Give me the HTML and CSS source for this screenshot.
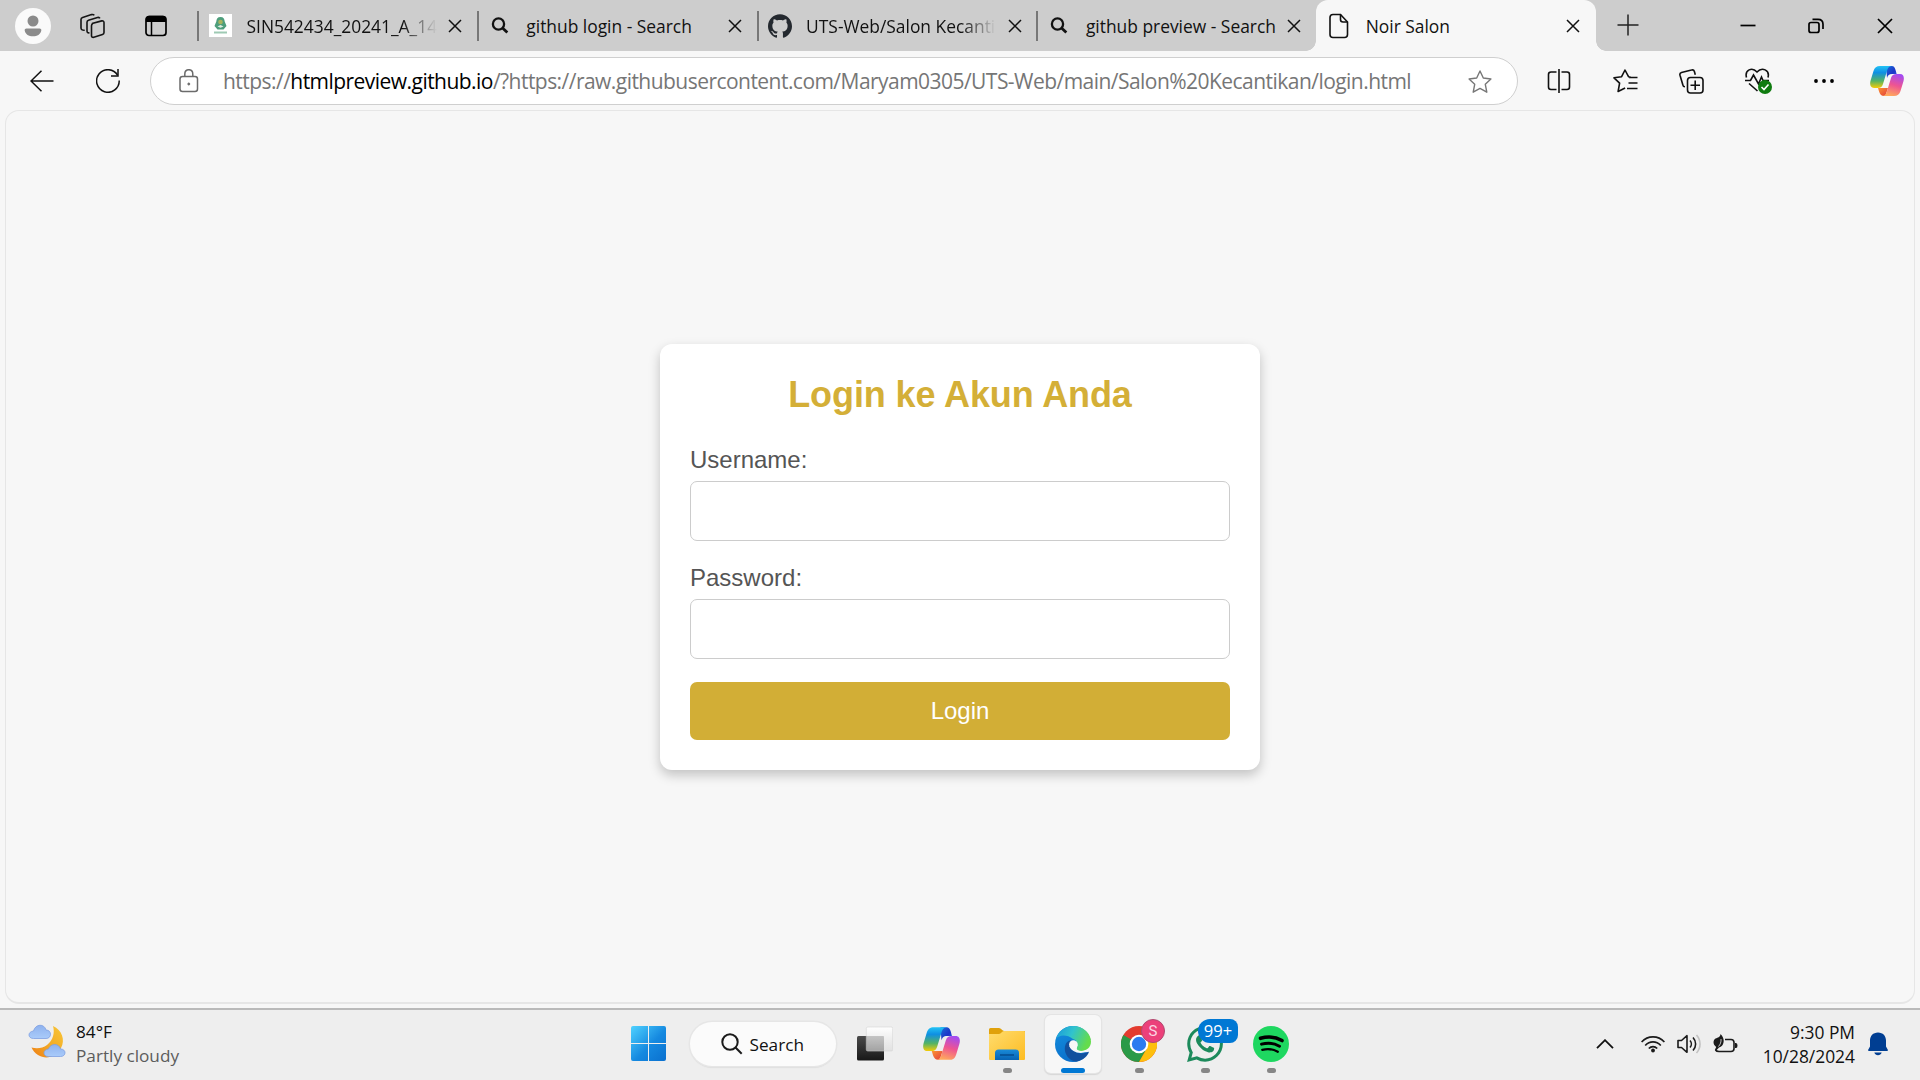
FILE: index.html
```html
<!DOCTYPE html>
<html lang="id">
<head>
<meta charset="utf-8">
<title>Noir Salon</title>
<link rel="stylesheet" href="styles.css">
</head>
<body>
<svg class="defs" aria-hidden="true">
  <defs>
    <linearGradient id="cpBlue" x1="0" y1="0" x2="0" y2="1"><stop offset="0" stop-color="#22c3f5"/><stop offset=".3" stop-color="#0f8fe3"/><stop offset=".68" stop-color="#55b364"/><stop offset="1" stop-color="#f7cc05"/></linearGradient>
    <linearGradient id="cpDeep" x1="0" y1="0" x2="1" y2="1"><stop offset="0" stop-color="#1a6fd8"/><stop offset=".6" stop-color="#1c35c8"/><stop offset="1" stop-color="#2b61e6"/></linearGradient>
    <linearGradient id="cpPink" x1=".7" y1="0" x2=".4" y2="1"><stop offset="0" stop-color="#a24bf3"/><stop offset=".5" stop-color="#ee5492"/><stop offset="1" stop-color="#ffa95c"/></linearGradient>
    <linearGradient id="cpRed" x1="0" y1="0" x2="1" y2="1"><stop offset="0" stop-color="#fc9430"/><stop offset="1" stop-color="#e23a3e"/></linearGradient>
    <linearGradient id="win" x1="0" y1="0" x2="35" y2="35" gradientUnits="userSpaceOnUse"><stop offset="0" stop-color="#4fd2ff"/><stop offset=".55" stop-color="#1589e0"/><stop offset="1" stop-color="#0a70cf"/></linearGradient>
    <linearGradient id="edgeTop" x1="0" y1="0" x2="1" y2=".35"><stop offset="0" stop-color="#1897dc"/><stop offset=".5" stop-color="#31c3cd"/><stop offset="1" stop-color="#64dc4c"/></linearGradient>
    <linearGradient id="edgeLeft" x1="0" y1="0" x2=".4" y2="1"><stop offset="0" stop-color="#1490df"/><stop offset="1" stop-color="#0b6fcb"/></linearGradient>
    <linearGradient id="folder" x1="0" y1="0" x2="1" y2="1"><stop offset="0" stop-color="#ffdc6e"/><stop offset="1" stop-color="#fdbc22"/></linearGradient>
    <linearGradient id="folderBlue" x1="0" y1="0" x2="0" y2="1"><stop offset="0" stop-color="#1a8bd8"/><stop offset="1" stop-color="#0763b4"/></linearGradient>
    <linearGradient id="dark" x1="0" y1="0" x2="0" y2="1"><stop offset="0" stop-color="#4a4a4a"/><stop offset="1" stop-color="#181818"/></linearGradient>
    <linearGradient id="glass" x1="0" y1="0" x2="0" y2="1"><stop offset="0" stop-color="#fff" stop-opacity=".95"/><stop offset="1" stop-color="#dedede" stop-opacity=".75"/></linearGradient>
    <linearGradient id="moon" x1="1" y1="0" x2="0" y2="1"><stop offset="0" stop-color="#f8c637"/><stop offset=".5" stop-color="#f3ac27"/><stop offset="1" stop-color="#ee7d15"/></linearGradient>
    <linearGradient id="cloud" x1="0" y1="0" x2="0" y2="1"><stop offset="0" stop-color="#8fb2ee"/><stop offset="1" stop-color="#a9cbfa"/></linearGradient>
    <symbol id="copilot" viewBox="0 0 34 30">
      <path fill="url(#cpRed)" d="M8 22h10l-2 6c-.4 1.400-1 2-2.300 2C10 30 9.300 26 8 22z"/>
      <path fill="url(#cpDeep)" d="M16 0h6c2.600 0 3.600 3.500 4.600 8H22c-3 0-4 1-5 4z"/>
      <path fill="url(#cpBlue)" d="M10 0h12c-3.500.2-4.300 2.500-5.200 5.500L13 18c-1 3-2.500 4-5.500 4H4C0 22-.4 18 .6 14.500L3.500 5C4.600 1.500 6.500 0 10 0z"/>
      <path fill="url(#cpPink)" d="M24 30H12c3.500-.2 4.300-2.500 5.200-5.500L21 12c1-3 2.500-4 5.500-4H30c4 0 4.400 4 3.400 7.500L30.500 25c-1.100 3.500-3 5-6.500 5z"/>
    </symbol>
    <symbol id="close" viewBox="0 0 14 14"><path d="M1 1l12 12M13 1L1 13" fill="none" stroke="#111" stroke-width="1.500"/></symbol>
    <symbol id="find" viewBox="0 0 18 18"><circle cx="7.500" cy="7" r="5.600" fill="none" stroke="#111" stroke-width="2.300"/><path d="M11.500 11l4.800 4.600" stroke="#111" stroke-width="2.800"/></symbol>
  </defs>
</svg>

<header class="tabbar">
  <div class="cell"><span class="avatar"><svg width="18" height="22" viewBox="0 0 18 22" fill="#8b8b8b"><circle cx="9" cy="6" r="5.500"/><path d="M2.500 13.500h13c1.500 0 2 1 1.800 2-.8 4-4 5.800-8.300 5.800S1.500 19.500.7 15.500c-.2-1 .3-2 1.800-2z"/></svg></span></div>
  <div class="cell"><svg width="26" height="26" viewBox="0 0 26 26" fill="none" stroke="#151515" stroke-width="1.600"><path d="M12 10.600l9.700-2.700c1.300-.3 2.300.4 2.300 1.700v10c0 1-.6 1.700-1.500 2l-8.700 2.700c-1.300.4-2.300-.4-2.300-1.600v-9.900c0-1.200.4-2 1.500-2.200z"/><path d="M9.500 19.800c-1.600.3-2.500-.4-2.500-1.800V9.300c0-1 .5-1.800 1.500-2.100l9-2.700c1-.3 2 0 2.400.9M4.700 17.200C2.800 17.400 1 16.800 1 15V6.500c0-1 .6-1.800 1.600-2.100L11.500 1.600c1.200-.3 2.200-.1 2.700.8"/></svg></div>
  <div class="cell"><svg width="22" height="22" viewBox="0 0 22 22"><rect x="1" y="1.500" width="20" height="19" rx="3" fill="none" stroke="#000" stroke-width="1.700"/><path d="M1 7V4c0-2 1-3.300 3.300-3.300h13.400C20 .7 21 2 21 4v3z"/><path d="M6.500 7v13.500" stroke="#000" stroke-width="1.500"/></svg></div>
  <div class="tab">
    <span class="fav"><svg width="23" height="23" viewBox="0 0 23 23"><path fill="#fff" d="M0 0h23v23H0z"/><path fill="#4e9e7c" d="M11.500 3c3 0 4 2 4.200 4.500L17.500 12l-3 3.500h-6L5.500 12l1.800-4.500C7.500 5 8.500 3 11.500 3z"/><circle cx="11.500" cy="8" r="2.300" fill="#a9b45f"/><path fill="#e1efe3" d="M8.500 12.500l3-1.500 3 1.500-3 1.200z"/><path stroke="#9fcab4" stroke-width="2" d="M5 18.500h13"/></svg></span>
    <span class="label fade">SIN542434_20241_A_14</span><svg class="x"><use href="#close"/></svg>
  </div>
  <div class="tab"><span class="fav"><svg width="18" height="18"><use href="#find"/></svg></span><span class="label">github login - Search</span><svg class="x"><use href="#close"/></svg></div>
  <div class="tab"><span class="fav"><svg width="24" height="24" viewBox="0 0 24 24"><path fill="#24292f" d="M12 .297c-6.630 0-12 5.373-12 12 0 5.303 3.438 9.800 8.205 11.385.6.113.82-.258.82-.577 0-.285-.01-1.040-.015-2.040-3.338.724-4.042-1.610-4.042-1.610C4.422 18.070 3.633 17.700 3.633 17.700c-1.087-.744.084-.729.084-.729 1.205.084 1.838 1.236 1.838 1.236 1.070 1.835 2.809 1.305 3.495.998.108-.776.417-1.305.76-1.605-2.665-.3-5.466-1.332-5.466-5.930 0-1.310.465-2.380 1.235-3.220-.135-.303-.54-1.523.105-3.176 0 0 1.005-.322 3.300 1.230.96-.267 1.980-.399 3-.405 1.020.006 2.040.138 3 .405 2.280-1.552 3.285-1.230 3.285-1.230.645 1.653.24 2.873.12 3.176.765.84 1.230 1.910 1.230 3.220 0 4.610-2.805 5.625-5.475 5.920.42.36.81 1.096.81 2.220 0 1.606-.015 2.896-.015 3.286 0 .315.21.69.825.57C20.565 22.092 24 17.592 24 12.297c0-6.627-5.373-12-12-12"/></svg></span><span class="label fade">UTS-Web/Salon Kecanti</span><svg class="x"><use href="#close"/></svg></div>
  <div class="tab"><span class="fav"><svg width="18" height="18"><use href="#find"/></svg></span><span class="label">github preview - Search</span><svg class="x"><use href="#close"/></svg></div>
  <div class="tab active"><span class="fav"><svg width="20" height="26" viewBox="0 0 20 26" fill="none" stroke="#111" stroke-width="1.600"><path d="M4 1.500h7.500L18.500 9v12.500c0 2-1 3-3 3H4c-2 0-3-1-3-3v-17c0-2 1-3 3-3z"/><path d="M11.500 1.500v5c0 1.500.8 2.500 2.500 2.500h4.500"/></svg></span><span class="label">Noir Salon</span><svg class="x"><use href="#close"/></svg></div>
  <div class="cell plus"><svg width="22" height="22" viewBox="0 0 22 22" stroke="#222" stroke-width="1.500"><path d="M11 .5v21M.5 11h21"/></svg></div>
  <div class="cell win"><svg width="16" height="16" viewBox="0 0 16 16" stroke="#000" stroke-width="1.700"><path d="M.5 7.500h15"/></svg></div>
  <div class="cell"><svg width="16" height="16" viewBox="0 0 16 16" fill="none" stroke="#000" stroke-width="1.700"><rect x="1" y="4.500" width="10" height="10" rx="2"/><path d="M4.500 1.300H10c3.200 0 5 1.800 5 5V11"/></svg></div>
  <div class="cell"><svg width="16" height="16" viewBox="0 0 16 16" stroke="#000" stroke-width="1.700"><path d="M1 1l14 14M15 1L1 15"/></svg></div>
</header>

<nav class="toolbar">
  <div class="back"><svg width="24" height="22" viewBox="0 0 24 22" fill="none" stroke="#111" stroke-width="1.500"><path d="M23.500 11H1M11.500.7L1 11l10.500 10.300"/></svg></div>
  <div class="reload"><svg width="24" height="24" viewBox="0 0 24 24" fill="none" stroke="#111" stroke-width="1.500"><path d="M23.200 11.500A11.300 11.300 0 1 1 21.500 6"/><path d="M22 0v7h-7"/></svg></div>
  <div class="address">
    <svg class="lock" width="20" height="24" viewBox="0 0 20 24" fill="none" stroke="#6b6b6b" stroke-width="1.500"><rect x="1" y="7.500" width="17.500" height="15" rx="2.500"/><path d="M5.800 7.500V5.200c0-6 8-6 8 0v2.300"/><circle cx="9.800" cy="15" r="1" fill="#6b6b6b" stroke-width="1"/></svg>
    <span class="url">https://<b>htmlpreview.github.io</b>/?https://raw.githubusercontent.com/Maryam0305/UTS-Web/main/Salon%20Kecantikan/login.html</span>
    <svg class="star" width="24" height="24" viewBox="0 0 24 24" fill="none" stroke="#777" stroke-width="1.400" stroke-linejoin="round"><path d="M12 1l3.300 7 7.600 1-5.600 5.300 1.500 7.900-6.800-3.800-6.800 3.800 1.500-7.900L1.100 9l7.600-1z"/></svg>
  </div>
  <div class="tools">
    <div class="cell"><svg width="24" height="24" viewBox="0 0 24 24" fill="none" stroke="#111" stroke-width="1.600"><path d="M12 0v24M9.500 3H4Q1.500 3 1.500 5.500v12.500Q1.500 20.500 4 20.500h5.500M14.500 3H20q2.500 0 2.500 2.500v12.500q0 2.500-2.500 2.500h-5.500"/></svg></div>
    <div class="cell"><svg width="25" height="24" viewBox="0 0 25 24" fill="none" stroke="#111" stroke-width="1.600" stroke-linejoin="round"><path d="M17.500 8l-2-.3L12 1 8.600 7.700 1 8.800l5.600 5.400-1.500 8.300 7-3.500M16 8.500h8.500M15.500 14h9M14 19.500h10.500"/></svg></div>
    <div class="cell"><svg width="25" height="25" viewBox="0 0 25 25" fill="none" stroke="#111" stroke-width="1.600"><rect x="8.500" y="8.500" width="15.500" height="15.500" rx="3"/><path d="M16.200 11.500v9.500M11.500 16.200h9.500M6 17.800c-1.200 0-2-.8-2.200-2L1 6.300c-.4-1.500.2-2.500 1.500-2.900L12.500 1c1.400-.4 2.500.2 2.900 1.500l.9 3.200"/></svg></div>
    <div class="cell"><svg width="28" height="26" viewBox="0 0 28 26" fill="none" stroke="#111" stroke-width="1.600"><path d="M2.500 9.500C.5 2 8-1.500 13 4c5-5.500 13-2 11 5.500M1 12.500h5.500l3-5.500 5 9 3-7 1.500 3.500h6M5 15.500l8.500 7.500"/><circle cx="21" cy="19" r="7" fill="#107c10" stroke="none"/><path d="M17.500 19l2.500 2.500 4.500-5" stroke="#fff" stroke-width="1.600"/></svg></div>
    <div class="cell dots"><svg width="20" height="6" viewBox="0 0 20 6"><circle cx="2" cy="3" r="1.900"/><circle cx="10" cy="3" r="1.900"/><circle cx="18" cy="3" r="1.900"/></svg></div>
    <div class="cell"><svg width="34" height="30"><use href="#copilot"/></svg></div>
  </div>
</nav>

<main class="page">
  <form class="card">
    <h1>Login ke Akun Anda</h1>
    <label for="user">Username:</label>
    <input id="user" type="text">
    <label for="pass">Password:</label>
    <input id="pass" type="password">
    <button type="button">Login</button>
  </form>
</main>

<footer class="taskbar">
  <div class="weather">
    <svg width="38" height="36" viewBox="0 0 38 36"><path fill="url(#moon)" d="M25 2c9 4 12.500 14 8 22-5 9-15 12-23 7-3-2-5-4-6.500-7.500 5 1.500 11 1 15.500-2.500C25 16 27 9 25 2z"/><path fill="url(#cloud)" stroke="#7d9fe2" stroke-width=".8" d="M5.500 14.500c-6 0-6-7 0-7.500C7.500-.5 16.500-.5 18 6c6 0 6 8.500 0 8.500z"/><path fill="url(#cloud)" stroke="#7d9fe2" stroke-width=".8" d="M20.500 32.500c-6 0-6-7 0-7.500 2-6 10.500-6 12 0 6 0 6 7.500 0 7.500z"/></svg>
    <div class="wtext"><span class="temp">84°F</span><span class="cond">Partly cloudy</span></div>
  </div>
  <div class="apps">
    <div class="app"><svg width="35" height="35" viewBox="0 0 35 35" fill="url(#win)"><path d="M2 0h15v17H0V2Q0 0 2 0zM18 0h15q2 0 2 2v15H18zM0 18h17v17H2q-2 0-2-2zM18 18h17v15q0 2-2 2H18z"/></svg></div>
    <div class="search"><svg width="22" height="22" viewBox="0 0 22 22" fill="none" stroke="#1b1b1b" stroke-width="2"><circle cx="9" cy="9" r="7.700"/><path d="M14.500 14.500L20.700 20.700"/></svg><span>Search</span></div>
    <div class="app"><svg width="36" height="35" viewBox="0 0 36 35"><rect y="10" width="27" height="24.500" rx="1.500" fill="url(#dark)"/><rect x="9.300" y="1" width="26.400" height="24" rx="1.500" fill="url(#glass)" stroke="#d4d4d4" stroke-width=".6"/><path d="M9 10h18v15H9z" fill="#777" opacity=".25"/></svg></div>
    <div class="app"><svg width="37" height="33"><use href="#copilot"/></svg></div>
    <div class="app dot"><svg width="36" height="34" viewBox="0 0 36 34"><path fill="#e0a10b" d="M0 2.500Q0 1 1.500 1H10c2 0 3.500 3 5 3h21v8H0z"/><path fill="url(#folder)" d="M0 7h10c2 0 3-3 5-3h20q1 0 1 1v27q0 1-1 1H1q-1 0-1-1z"/><path fill="url(#folderBlue)" d="M6 33v-7q0-3.500 3.500-3.500h17Q30 22.500 30 26v7z"/><path d="M11 28h14" stroke="#064f92" stroke-width="1.600"/></svg></div>
    <div class="app current"><svg width="36" height="36" viewBox="0 0 36 36"><circle cx="18" cy="18" r="18" fill="url(#edgeLeft)"/><path fill="#f7f7f7" d="M24 36l12-11V14H22l-3 10 16 3z"/><path fill="url(#edgeTop)" d="M1 13C3.500 5 10 0 18 0c10 0 18 7.500 18 15.500 0 6-4.500 9.500-10 9.500-4 0-5.500-1.500-4-4 1.500-3 0-7-4-8C12 8 4 8.500 1 13z"/><path fill="#12509e" d="M11 17.500C7 26 14 35.500 21.500 35.500 27 34.500 31.500 31 33.500 27c.7-1.500-.2-1.300-1.300-.7C26 29 18 27 15.500 21c-1-3-.5-5 1-6.500-2.500-.5-4.500 1-5.500 3z"/><circle cx="18.300" cy="18.500" r="4.200" fill="#f7f7f7"/><path fill="#f7f7f7" d="M14.300 20c2 6 10 8.500 17.500 5.800l-1.500-1.400c-3.500 1-7 .8-8.300-.8-.7-1 .2-2 .5-4.600z"/></svg></div>
    <div class="app dot"><svg width="36" height="36" viewBox="0 0 36 36"><circle cx="18" cy="18" r="18" fill="#e33b2e"/><path fill="#2a9a47" d="M18 18L2.400 9A18 18 0 0 0 18 36l7.800-13.500z"/><path fill="#fdbf0d" d="M18 36a18 18 0 0 0 15.600-27H18v9l7.800 4.500z"/><circle cx="18" cy="18" r="9.300" fill="#fff"/><circle cx="18" cy="18" r="7.200" fill="#2c7bf0"/></svg><span class="profile">S</span></div>
    <div class="app dot"><svg width="36" height="36" viewBox="0 0 24 24" fill="#1c8a5b"><path d="M17.472 14.382c-.297-.149-1.758-.867-2.030-.967-.273-.099-.471-.148-.67.15-.197.297-.767.966-.94 1.164-.173.199-.347.223-.644.075-.297-.15-1.255-.463-2.390-1.475-.883-.788-1.480-1.761-1.653-2.059-.173-.297-.018-.458.13-.606.134-.133.298-.347.446-.52.149-.174.198-.298.298-.497.099-.198.05-.371-.025-.52-.075-.149-.669-1.612-.916-2.207-.242-.579-.487-.5-.669-.51-.173-.008-.371-.01-.57-.01-.198 0-.52.074-.792.372-.272.297-1.040 1.016-1.040 2.479 0 1.462 1.065 2.875 1.213 3.074.149.198 2.096 3.200 5.077 4.487.709.306 1.262.489 1.694.625.712.227 1.360.195 1.871.118.571-.085 1.758-.719 2.006-1.413.248-.694.248-1.289.173-1.413-.074-.124-.272-.198-.57-.347m-5.421 7.403h-.004a9.870 9.870 0 01-5.031-1.378l-.361-.214-3.741.982.998-3.648-.235-.374a9.860 9.860 0 01-1.510-5.260c.001-5.450 4.436-9.884 9.888-9.884 2.640 0 5.122 1.030 6.988 2.898a9.825 9.825 0 012.893 6.994c-.003 5.450-4.437 9.884-9.885 9.884m8.413-18.297A11.815 11.815 0 0012.050 0C5.495 0 .16 5.335.157 11.892c0 2.096.547 4.142 1.588 5.945L.057 24l6.305-1.654a11.882 11.882 0 005.683 1.448h.005c6.554 0 11.890-5.335 11.893-11.893a11.821 11.821 0 00-3.480-8.413z"/></svg><span class="count">99+</span></div>
    <div class="app dot"><svg width="36" height="36" viewBox="0 0 36 36" fill="none" stroke="#000" stroke-linecap="round"><circle cx="18" cy="18" r="18" fill="#1ed760" stroke="none"/><path stroke-width="3.600" d="M7.500 12.300c7-2 15.500-1.200 21.500 2.200"/><path stroke-width="2.900" d="M8.500 18.200c6-1.700 13-.9 18 2"/><path stroke-width="2.300" d="M9.300 23.800c5-1.300 11-.7 15.500 1.900"/></svg></div>
  </div>
  <div class="tray">
    <div class="chev"><svg width="18" height="10" viewBox="0 0 18 10" fill="none" stroke="#111" stroke-width="1.800"><path d="M1 9.200l8-8 8 8"/></svg></div>
    <div class="sys"><svg width="24" height="18" viewBox="0 0 24 18" fill="none" stroke="#1b1b1b" stroke-width="1.700"><path d="M.6 7c6.300-6.800 16.500-6.800 22.800 0M4.200 10.500c4.500-4.800 11.100-4.800 15.600 0M7.800 13.500c2.500-2.600 5.900-2.600 8.400 0"/><circle cx="12" cy="15.500" r="1.900" fill="#1b1b1b" stroke="none"/></svg></div>
    <div class="sys"><svg width="24" height="20" viewBox="0 0 24 20" fill="none" stroke="#1b1b1b" stroke-width="1.600"><path d="M1 6.500h3.500L10 1.700v16.600l-5.500-4.800H1z" stroke-linejoin="round"/><path d="M13 6.500c1.800 2 1.800 5 0 7M16 3.500c3.500 3.800 3.500 9.200 0 13"/><path d="M19.500 1c4.700 5.300 4.700 12.700 0 18" stroke="#c2c2c2"/></svg></div>
    <div class="sys"><svg width="25" height="21" viewBox="0 0 25 21"><path d="M12 5.500h6q3 0 3 3v6q0 3-3 3H6q-2.500 0-3.500-1.500" fill="none" stroke="#1b1b1b" stroke-width="1.600"/><path fill="#1b1b1b" d="M22 9h1q1.500 0 1.500 2.500T23 14h-1zM7.500 0c2.500 2.500 3.700 5.500 3 8.500-.4 2.500-2 4.500-4.500 5l-3 3.200-1.200-.8 1.400-3C-.5 10.500 0 6 2.500 4.500 5 3.500 7.500 3 7.500 0z"/><path d="M8 5C8.300 8 7.300 10.500 5.500 12.500" stroke="#eee" stroke-width=".8" fill="none"/></svg></div>
    <div class="clock"><span>9:30 PM</span><span>10/28/2024</span></div>
    <svg width="20" height="24" viewBox="0 0 20 24" fill="#003e92"><path d="M10 .5c5 0 8 3.600 8 8v6l1.800 3.300q.5 1.200-.8 1.200H1q-1.300 0-.8-1.200L2 14.500v-6c0-4.400 3-8 8-8zM6.300 20.500h7.400C13 22.300 11.800 23.300 10 23.300s-3-1-3.700-2.800z"/></svg>
  </div>
</footer>
</body>
</html>
```
FILE: styles.css
```css
* { box-sizing: border-box; }

body {
  margin: 0;
  width: 1920px;
  height: 1080px;
  overflow: hidden;
  display: grid;
  grid-template-rows: 51px 59px 898px 72px;
  background: #f7f7f7;
  color: #111;
  font-family: "Open Sans", "Noto Sans", sans-serif;
}

svg { display: block; flex: none; }
.defs { position: absolute; width: 0; height: 0; }
.cell { display: flex; align-items: center; justify-content: center; }

/* Tab strip */
.tabbar {
  display: grid;
  grid-template-columns: 66px 54px 77px repeat(5, 279.8px) 64px 122px 69px 69px;
  background: #cdcdcd;
}
.tabbar > .cell:nth-child(3) { padding-right: 5px; }
.plus { padding-bottom: 2px; }
.win { padding-left: 54px; }
.avatar {
  width: 36px;
  height: 36px;
  border-radius: 50%;
  background: #fafafa;
  display: flex;
  align-items: center;
  justify-content: center;
}
.tab {
  display: flex;
  align-items: center;
  min-width: 0;
  background: linear-gradient(#777, #777) 0 11px / 2px 30px no-repeat;
}
.fav {
  width: 24px;
  margin-left: 11px;
  display: flex;
  justify-content: center;
}
.label {
  width: 190px;
  margin-left: 14.500px;
  font-size: 17.4px;
  line-height: 24px;
  white-space: nowrap;
}
.fade {
  -webkit-mask-image: linear-gradient(90deg, #000 155px, transparent 190px);
  mask-image: linear-gradient(90deg, #000 155px, transparent 190px);
}
.x { width: 14px; height: 14px; margin-left: 11.500px; }
.active {
  position: relative;
  background: #f7f7f7;
  border-radius: 12px 12px 0 0;
}
.active .x { margin-left: 10.500px; }
.active::before,
.active::after {
  content: "";
  position: absolute;
  bottom: 0;
  width: 10px;
  height: 10px;
}
.active::before { left: -10px; background: radial-gradient(circle at 0 0, transparent 9.5px, #f7f7f7 10px); }
.active::after { right: -10px; background: radial-gradient(circle at 100% 0, transparent 9.5px, #f7f7f7 10px); }

/* Toolbar */
.toolbar { display: flex; padding-top: 6px; }
.back, .reload { height: 48px; display: flex; align-items: center; justify-content: center; }
.back { width: 84px; }
.reload { width: 48px; }
.address {
  width: 1368px;
  height: 48px;
  margin-left: 18px;
  padding: 0 25px 0 28px;
  display: flex;
  align-items: center;
  background: #fff;
  border: 1.5px solid #cfcfcf;
  border-radius: 24px;
}
.lock { margin-top: -1px; }
.url {
  width: 1226px;
  margin-left: 24px;
  font-size: 21px;
  letter-spacing: -0.54px;
  white-space: nowrap;
  color: #767676;
}
.url b { font-weight: 400; color: #000; }
.star { margin: 1px 0 0 19px; }
.tools {
  height: 48px;
  margin-left: 8px;
  display: grid;
  grid-template-columns: repeat(5, 66.4px) 58px;
}
.dots { padding-right: 2px; }

/* Page viewport */
.page {
  margin: 0 5px 4px;
  padding-top: 233px;
  border: 1px solid #e6e6e6;
  border-bottom-width: 2px;
  border-radius: 14px;
  display: flex;
  justify-content: center;
  align-items: flex-start;
  font-family: "Liberation Sans", Arial, sans-serif;
}
.card {
  width: 600px;
  height: 426px;
  padding: 30px;
  background: #fff;
  border-radius: 12px;
  box-shadow: 0 5px 12px rgba(0, 0, 0, .22);
}
h1 {
  margin: 0 0 31px;
  font-size: 36px;
  line-height: 41px;
  letter-spacing: -0.1px;
  text-align: center;
  color: #d4af37;
}
label {
  display: block;
  margin-bottom: 8px;
  font-size: 24px;
  line-height: 27px;
  color: #555;
}
input {
  display: block;
  width: 100%;
  height: 60px;
  margin: 0 0 23px;
  background: #fff;
  border: 1px solid #ccc;
  border-radius: 7px;
}
button {
  width: 100%;
  height: 58px;
  border: 0;
  border-radius: 7px;
  background: #d2ae36;
  color: #fff;
  font: 24px "Liberation Sans", Arial, sans-serif;
}

/* Taskbar */
.taskbar {
  display: grid;
  grid-template-columns: 615px 690px 1fr;
  background: #eee;
  border-top: 2px solid #bababa;
  font-size: 17.2px;
}
.weather { display: flex; align-items: flex-start; padding: 14px 0 0 28px; }
.wtext { display: flex; flex-direction: column; margin: -4px 0 0 10px; line-height: 24px; }
.cond { color: #5c5c5c; }
.apps {
  display: grid;
  grid-template-columns: 66px 161px repeat(7, 66px);
  align-items: center;
}
.app {
  position: relative;
  width: 58px;
  height: 58px;
  margin-top: -3px;
  justify-self: center;
  display: flex;
  align-items: center;
  justify-content: center;
}
.current { width: 56px; background: #f7f7f7; border-radius: 6px; box-shadow: 0 0 0 1px #e4e4e4, 0 1px 1px 1px #d6d6d6; }
.dot::after, .current::after {
  content: "";
  position: absolute;
  bottom: 0;
  width: 9px;
  height: 5px;
  border-radius: 3px;
  background: #868686;
}
.current::after { width: 24px; background: #0078d4; }
.search {
  width: 146px;
  height: 44px;
  margin: -2px 0 0 2px;
  justify-self: center;
  padding-left: 31px;
  display: flex;
  align-items: center;
  gap: 7px;
  border-radius: 23px;
  background: #fbfbfb;
  box-shadow: 0 0 0 1.5px #e6e6e6, 0 2px 1px #dadada;
}
.profile {
  position: absolute;
  top: 4px;
  right: 3px;
  width: 24px;
  height: 24px;
  border-radius: 50%;
  background: #ec407a;
  border: 1px solid #b04a70;
  color: #fbd5e2;
  font: 15px/22px Roboto, sans-serif;
  text-align: center;
}
.count {
  position: absolute;
  top: 4px;
  right: -4px;
  width: 40px;
  height: 24px;
  border-radius: 12px 8px 8px 12px;
  background: #0078d4;
  color: #fff;
  font-size: 16.5px;
  line-height: 24px;
  text-align: center;
}
.tray {
  display: flex;
  align-items: center;
  justify-content: flex-end;
  padding: 0 32px 2px 0;
}
.chev { margin-right: 21px; }
.sys { width: 36px; display: flex; justify-content: center; }
.clock {
  width: 106px;
  margin: 0 13px 0 6px;
  display: flex;
  flex-direction: column;
  text-align: right;
  font-size: 17.4px;
  line-height: 24px;
}
```
